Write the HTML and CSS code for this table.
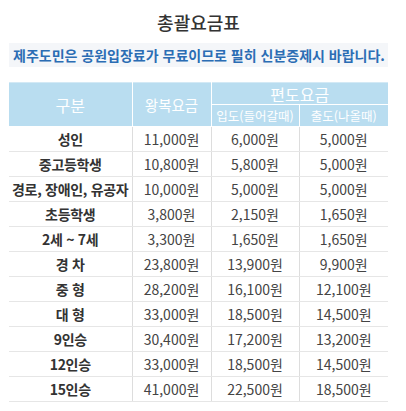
FILE: index.html
```html
<!DOCTYPE html>
<html lang="ko">
<head>
    <meta charset="UTF-8">
    <meta name="viewport" content="width=device-width, initial-scale=1.0">
    <title>총괄요금표</title>
    <link rel="stylesheet" href="styles.css">
</head>
<body>
    <div class="container">
        <h1>총괄요금표</h1>

        <p class="notice">제주도민은 공원입장료가 무료이므로 필히 신분증제시 바랍니다.</p>

        <table class="fare-table">
            <colgroup>
                <col class="col-type">
                <col class="col-round">
                <col class="col-in">
                <col class="col-out">
            </colgroup>
            <thead>
                <tr>
                    <th rowspan="2" class="big">구분</th>
                    <th rowspan="2" class="mid">왕복요금</th>
                    <th colspan="2" class="big">편도요금</th>
                </tr>
                <tr>
                    <th class="small">입도(들어갈때)</th>
                    <th class="small">출도(나올때)</th>
                </tr>
            </thead>
            <tbody>
                <tr><td>성인</td><td>11,000원</td><td>6,000원</td><td>5,000원</td></tr>
                <tr><td>중고등학생</td><td>10,800원</td><td>5,800원</td><td>5,000원</td></tr>
                <tr><td>경로, 장애인, 유공자</td><td>10,000원</td><td>5,000원</td><td>5,000원</td></tr>
                <tr><td>초등학생</td><td>3,800원</td><td>2,150원</td><td>1,650원</td></tr>
                <tr><td>2세 ~ 7세</td><td>3,300원</td><td>1,650원</td><td>1,650원</td></tr>
                <tr><td>경 차</td><td>23,800원</td><td>13,900원</td><td>9,900원</td></tr>
                <tr><td>중 형</td><td>28,200원</td><td>16,100원</td><td>12,100원</td></tr>
                <tr><td>대 형</td><td>33,000원</td><td>18,500원</td><td>14,500원</td></tr>
                <tr><td>9인승</td><td>30,400원</td><td>17,200원</td><td>13,200원</td></tr>
                <tr><td>12인승</td><td>33,000원</td><td>18,500원</td><td>14,500원</td></tr>
                <tr><td>15인승</td><td>41,000원</td><td>22,500원</td><td>18,500원</td></tr>
            </tbody>
        </table>
    </div>
</body>
</html>
```

FILE: styles.css
```css
* {
    margin: 0;
    padding: 0;
    box-sizing: border-box;
    font-family: 'Noto Sans CJK KR', 'Noto Sans', sans-serif;
}

body {
    background-color: #fff;
}

.container {
    width: 379px;
    margin-left: 9px;
    padding-top: 10px;
}

h1 {
    text-align: center;
    font-size: 18px;
    font-weight: 500;
    color: #333;
    line-height: 25px;
    margin-bottom: 8px;
}

.notice {
    background-color: #f4f6f9;
    color: #2b6db4;
    font-size: 14px;
    font-weight: bold;
    line-height: 24px;
    padding-left: 4px;
    margin-bottom: 15px;
    white-space: nowrap;
}

.fare-table {
    width: 379px;
    border-collapse: collapse;
    table-layout: fixed;
    border-top: 1px solid #d3e9f5;
}

.col-type { width: 123px; }
.col-round { width: 79px; }
.col-in { width: 88px; }
.col-out { width: 89px; }

.fare-table th {
    background-color: #b9ddf0;
    color: #fff;
    font-weight: normal;
    border: 1px solid #fff;
    border-top: none;
    height: 22px;
    padding: 0;
    line-height: 20px;
}

.fare-table th:first-child {
    border-left: none;
}

.fare-table tr th:last-child {
    border-right: none;
}

.fare-table th.big {
    font-size: 16px;
}

.fare-table th.mid {
    font-size: 14.5px;
}

.fare-table th.small {
    font-size: 12.5px;
}

.fare-table td {
    text-align: center;
    height: 25px;
    font-size: 14px;
    color: #444;
    border-bottom: 1px solid #e6e6e6;
    border-left: 1px solid #ddd;
    padding: 0;
    white-space: nowrap;
}

.fare-table td:first-child {
    border-left: none;
    font-weight: bold;
    color: #333;
    letter-spacing: -0.3px;
}
```
